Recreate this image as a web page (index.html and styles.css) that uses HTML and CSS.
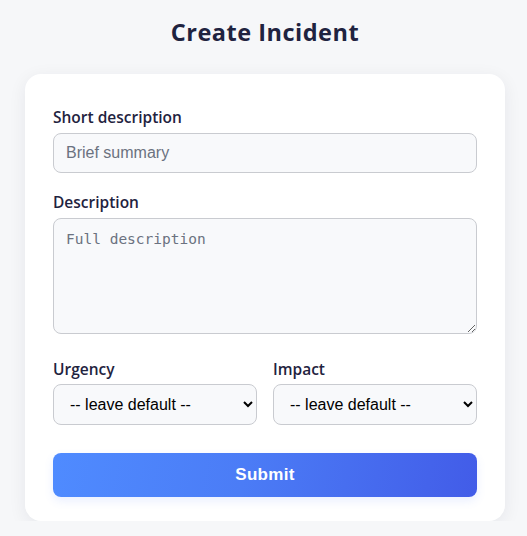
FILE: index.html
```html
<!DOCTYPE html>
<html>
<head>
<meta charset="utf-8">
<link rel="stylesheet" href="styles.css">
</head>
<body>
<main class="page">
  <h1 class="title">Create Incident</h1>
  <form class="card">
    <div class="field field-wide">
      <label class="label">Short description</label>
      <input class="input" type="text" placeholder="Brief summary">
    </div>
    <div class="field field-wide field-tall">
      <label class="label">Description</label>
      <textarea class="textarea" placeholder="Full description"></textarea>
    </div>
    <div class="row">
      <div class="field">
        <label class="label">Urgency</label>
        <select class="select"><option>-- leave default --</option></select>
      </div>
      <div class="field">
        <label class="label">Impact</label>
        <select class="select"><option>-- leave default --</option></select>
      </div>
    </div>
    <button class="submit" type="button">Submit</button>
  </form>
</main>
</body>
</html>
```

FILE: styles.css
```css
html, body {
  margin: 0;
  padding: 0;
  background: #f6f7f9;
}
body {
  font-family: "Open Sans", "Noto Sans", sans-serif;
  color: #1f2340;
}
.page {
  display: flex;
  flex-direction: column;
  align-items: center;
  padding: 16px 0 0 3px;
}
.title {
  margin: 0 0 26px;
  font-size: 23.5px;
  font-weight: 700;
  line-height: 32px;
  letter-spacing: 0.5px;
  color: #1f2340;
}
.card {
  box-sizing: border-box;
  width: 480px;
  background: #fff;
  border-radius: 16px;
  padding: 33px 28px 24px;
  box-shadow: 0 4px 18px rgba(20, 30, 60, 0.07);
  display: flex;
  flex-direction: column;
  gap: 19px;
}
.field {
  display: flex;
  flex-direction: column;
  gap: 5px;
  min-width: 0;
}
.field-wide {
  gap: 6px;
}
.field-tall {
  margin-bottom: 6px;
}
.label {
  font-size: 15.5px;
  font-weight: 600;
  line-height: 20px;
  color: #1f2340;
}
.input, .textarea, .select {
  box-sizing: border-box;
  width: 100%;
  border: 1px solid #c9cbd0;
  border-radius: 8px;
  background: #f8f9fb;
  color: #111;
  margin: 0;
}
.input {
  height: 40px;
  padding: 0 12px;
  font-family: "Liberation Sans", Arial, sans-serif;
  font-size: 16px;
}
.input::placeholder {
  color: #6b7280;
}
.textarea {
  height: 116px;
  padding: 12px 12px;
  font-family: "DejaVu Sans Mono", monospace;
  font-size: 14.5px;
  resize: vertical;
  display: block;
}
.textarea::placeholder {
  color: #6b7280;
}
.row {
  display: grid;
  grid-template-columns: 1fr 1fr;
  gap: 16px;
}
.select {
  height: 41px;
  padding: 0 8px 0 12px;
  font-family: "Liberation Sans", Arial, sans-serif;
  font-size: 16px;
  color: #000;
}
.submit {
  margin-top: 9px;
  height: 44px;
  border: none;
  border-radius: 8px;
  background: linear-gradient(100deg, #4f8bff 0%, #4b7cf6 45%, #425ce8 100%);
  color: #fff;
  font-family: "Liberation Sans", Arial, sans-serif;
  font-weight: 700;
  font-size: 17px;
  letter-spacing: 0.3px;
  box-shadow: 0 4px 10px rgba(79, 120, 255, 0.12);
  cursor: pointer;
}
```
